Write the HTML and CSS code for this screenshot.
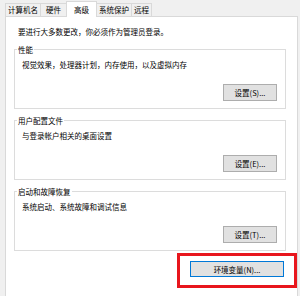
FILE: index.html
```html
<!DOCTYPE html>
<html lang="zh-CN">
<head>
    <meta charset="UTF-8">
    <title>系统属性 - 高级</title>
    <link rel="stylesheet" href="styles.css">
</head>
<body>
    <div class="tabs">
        <div class="tab">计算机名</div>
        <div class="tab tab-wide">硬件</div>
        <div class="tab active">高级</div>
        <div class="tab">系统保护</div>
        <div class="tab">远程</div>
    </div>

    <div class="panel">
        <p class="note">要进行大多数更改，你必须作为管理员登录。</p>

        <fieldset class="group">
            <legend>性能</legend>
            <p class="desc">视觉效果，处理器计划，内存使用，以及虚拟内存</p>
            <div class="actions">
                <button>设置(S)...</button>
            </div>
        </fieldset>

        <fieldset class="group">
            <legend>用户配置文件</legend>
            <p class="desc">与登录帐户相关的桌面设置</p>
            <div class="actions">
                <button>设置(E)...</button>
            </div>
        </fieldset>

        <fieldset class="group last">
            <legend>启动和故障恢复</legend>
            <p class="desc">系统启动、系统故障和调试信息</p>
            <div class="actions">
                <button>设置(T)...</button>
            </div>
        </fieldset>

        <div class="env-row">
            <div class="highlight">
                <button class="env focused">环境变量(N)...</button>
            </div>
        </div>
    </div>
</body>
</html>
```

FILE: styles.css
```css
html, body {
    margin: 0;
    padding: 0;
}
body {
    width: 300px;
    height: 296px;
    overflow: hidden;
    background-color: #f0f0f0;
    font-family: "Noto Sans CJK SC", "Microsoft YaHei", sans-serif;
    font-size: 7.5px;
    color: #000;
}
.tabs {
    display: flex;
    align-items: flex-end;
    height: 16px;
    padding-left: 5px;
}
.tab {
    height: 13px;
    line-height: 12px;
    padding: 0 2px;
    border: 1px solid #d9d9d9;
    border-bottom: none;
    margin-right: -1px;
    box-sizing: border-box;
    background-color: #f0f0f0;
    white-space: nowrap;
}
.tab-wide {
    padding: 0 5px;
}
.tab.active {
    height: 16px;
    line-height: 15px;
    padding: 0 7px;
    margin-bottom: -1px;
    background-color: #fff;
    position: relative;
    z-index: 1;
}
.panel {
    margin-left: 5px;
    width: 293px;
    height: 290px;
    box-sizing: border-box;
    border: 1px solid #d9d9d9;
    background-color: #fff;
    padding: 10px 11px 0 8px;
}
.note {
    margin: 0 0 8px 4px;
    line-height: 10px;
}
.group {
    margin: 0 0 7px 0;
    padding: 6px 8px 7px 7px;
    border: 1px solid #dcdcdc;
}
.group.last {
    margin-bottom: 0;
}
.group legend {
    padding: 0 1px;
    margin-left: -5px;
    line-height: 9px;
}
.desc {
    margin: 0;
    line-height: 10px;
}
.actions {
    display: flex;
    justify-content: flex-end;
    margin-top: 14px;
}
button {
    font-family: inherit;
    font-size: 7.5px;
    color: #000;
    width: 54px;
    height: 17px;
    padding: 0;
    box-sizing: border-box;
    background-color: #e1e1e1;
    border: 1px solid #adadad;
    border-radius: 0;
}
.env-row {
    display: flex;
    justify-content: flex-end;
    margin-top: 2px;
    margin-right: -11px;
}
.highlight {
    border: 3px solid #e8161d;
    padding: 5px 10px 8px 10px;
}
.env {
    width: 94px;
    height: 16px;
}
.env.focused {
    border-color: #0078d7;
}
```
